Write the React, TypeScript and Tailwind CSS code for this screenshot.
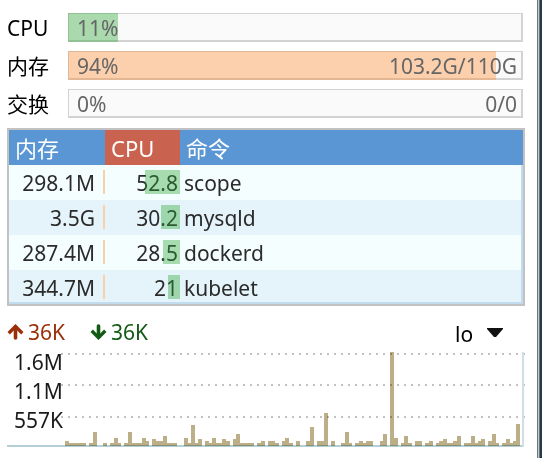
const meters = [
  { label: "CPU", percent: 11, detail: "", fill: "bg-[#2ca534]/39" },
  { label: "内存", percent: 94, detail: "103.2G/110G", fill: "bg-[#ff8524]/36" },
  { label: "交换", percent: 0, detail: "0/0", fill: "bg-[#2ca534]/39" },
];

const processes = [
  { memory: "298.1M", cpu: "52.8", share: 47, command: "scope" },
  { memory: "3.5G", cpu: "30.2", share: 26, command: "mysqld" },
  { memory: "287.4M", cpu: "28.5", share: 23, command: "dockerd" },
  { memory: "344.7M", cpu: "21", share: 16, command: "kubelet" },
];

const traffic = [
  5, 3, 3, 3, 3, 3, 0, 3, 14, 0, 0, 3, 0, 3, 8, 3, 0, 3, 14, 3, 3, 3, 8, 5, 0, 7,
  5, 5, 10, 3, 3, 3, 0, 0, 8, 3, 21, 3, 7, 0, 5, 3, 8, 3, 3, 7, 5, 0, 7, 12, 3, 3,
  3, 3, 0, 3, 5, 0, 5, 5, 3, 0, 5, 8, 3, 0, 5, 0, 0, 5, 19, 0, 5, 5, 33, 0, 5, 0,
  0, 3, 14, 3, 0, 3, 5, 3, 5, 5, 0, 0, 5, 12, 0, 94, 8, 0, 3, 10, 3, 0, 5, 5, 0, 3,
  5, 0, 3, 5, 7, 3, 3, 5, 10, 0, 3, 3, 10, 3, 5, 7, 0, 5, 12, 3, 0, 3, 7, 3, 5, 22,
];

const STEP = 3.5;

function Meter({ label, percent, detail, fill }: (typeof meters)[number]) {
  return (
    <div className="flex h-[29px] items-center pr-0.5">
      <span className="w-[61px] shrink-0 text-black">{label}</span>
      <div
        role="progressbar"
        aria-label={label}
        aria-valuenow={percent}
        className="relative h-full flex-1"
      >
        <div className="absolute inset-0 border-t border-r-2 border-b-2 border-l border-[#d3d3d3] bg-[#fafafa]" />
        <div className={`absolute inset-y-0 left-0 ${fill}`} style={{ width: `${percent}%` }} />
        <div className="relative flex h-full items-center justify-between pr-1.5 pl-[9px] text-[#666]">
          <span>{percent}%</span>
          <span>{detail}</span>
        </div>
      </div>
    </div>
  );
}

function ProcessTable() {
  return (
    <div className="relative mt-2.5 h-[178px] overflow-hidden border-2 border-[#c2c2c2]">
      <table className="w-full table-fixed border-collapse text-left">
        <thead>
          <tr className="h-[35px] bg-[#5a96d3] text-[22px] text-white">
            <th className="w-24 p-0 pl-1.5 font-normal">内存</th>
            <th className="w-[75px] bg-[#c9634f] p-0 pl-1.5 font-normal">CPU</th>
            <th className="p-0 pl-1.5 font-normal">命令</th>
          </tr>
        </thead>
        <tbody>
          {processes.map((p) => (
            <tr key={p.command} className="h-[35px] bg-[#f5feff] text-[#2b2b2b] even:bg-[#e5f4fa]">
              <td className="relative p-0 pr-2.5 text-right">
                {p.memory}
                <span className="absolute top-[5px] right-0 h-6 w-0.5 bg-[#fad0ab]" />
              </td>
              <td className="relative p-0 pr-0.5 text-right">
                {p.cpu}
                <span
                  className="absolute top-[5px] right-0 h-6 bg-[#2ca534]/39"
                  style={{ width: `${p.share}%` }}
                />
              </td>
              <td className="p-0 pl-1">{p.command}</td>
            </tr>
          ))}
        </tbody>
      </table>
      <div className="pointer-events-none absolute inset-x-0 top-[35px] bottom-0 border-r-2 border-b-2 border-[#c1dbef]" />
    </div>
  );
}

function Arrow({ down = false }: { down?: boolean }) {
  return (
    <svg
      className={down ? "h-4 w-[17px] rotate-180" : "h-4 w-[17px]"}
      viewBox="0 0 17 16"
      fill="none"
      stroke="currentColor"
      aria-hidden="true"
    >
      <path d="M1.7 9.2L8.5 2.4L15.3 9.2" strokeWidth="3.4" />
      <path d="M8.5 3V14" strokeWidth="3.6" strokeLinecap="round" />
    </svg>
  );
}

function TrafficChart() {
  return (
    <div className="relative mt-1">
      <svg
        className="block h-[95px] w-full"
        viewBox="0 0 518 95"
        preserveAspectRatio="none"
        shapeRendering="crispEdges"
        aria-label="lo"
      >
        <g stroke="#c1c1c1" strokeWidth="2" strokeDasharray="2 5">
          <path d="M54 2H518M54 33H518M54 65H518" />
        </g>
        <path d="M0 94H517" stroke="#b5cfd8" strokeWidth="2" />
        <path d="M516 0V95" stroke="#d0dfe3" strokeWidth="2" />
        <g fill="#bcae86" className="mix-blend-multiply">
          {traffic.map((h, i) =>
            h ? <rect key={i} x={57.8 + i * STEP} y={94 - h} width="4" height={h} /> : null,
          )}
        </g>
      </svg>
      <div className="absolute -top-1 left-[7px] flex flex-col leading-[29px] text-[#1a1a1a]">
        <span>1.6M</span>
        <span>1.1M</span>
        <span>557K</span>
      </div>
    </div>
  );
}

export default function App() {
  return (
    <div className="flex min-h-screen bg-white font-['Noto_Sans','Noto_Sans_CJK_SC',sans-serif] text-[21px] leading-7">
      <main className="min-w-0 flex-1 pt-[13px] pr-3 pl-[7px]">
        <div className="flex flex-col gap-[9px]">
          {meters.map((m) => (
            <Meter key={m.label} {...m} />
          ))}
        </div>
        <ProcessTable />
        <div className="mt-2.5 flex h-8 items-center">
          <div className="flex w-[83px] items-center gap-1 text-[#9b2f0a]">
            <Arrow />
            <span>36K</span>
          </div>
          <div className="flex items-center gap-1 text-[#135a14]">
            <Arrow down />
            <span>36K</span>
          </div>
          <div className="relative mr-[22px] ml-auto">
            <select
              aria-label="网卡"
              className="block w-12 appearance-none bg-transparent pt-1 text-black"
            >
              <option>lo</option>
            </select>
            <svg
              className="pointer-events-none absolute top-3 right-0 h-[9px] w-4"
              viewBox="0 0 16 9"
              fill="#111"
            >
              <path d="M0 0H16V1L9 9H7L0 1Z" />
            </svg>
          </div>
        </div>
        <TrafficChart />
      </main>
      <div className="flex w-[5px] shrink-0">
        <div className="w-px bg-[#6c757a]" />
        <div className="w-px bg-[#c9c9c9]" />
        <div className="w-px bg-[#6c757a]" />
        <div className="flex-1 bg-[#203c50]" />
      </div>
    </div>
  );
}
